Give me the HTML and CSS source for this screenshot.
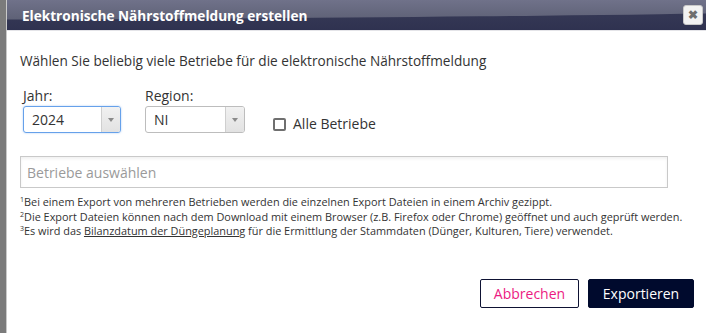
FILE: index.html
```html
<!DOCTYPE html>
<html lang="de">
  <head>
    <meta charset="UTF-8" />
    <meta name="viewport" content="width=device-width, initial-scale=1.0" />
    <title>Elektronische Nährstoffmeldung</title>
    <link rel="stylesheet" href="styles.css">
  </head>
  <body>
    <div class="page">
      <div class="strip"></div>
      <div class="dialog">
        <div class="dialog-header">
          <h1>Elektronische Nährstoffmeldung erstellen</h1>
          <button class="close" title="Schließen">&#x2716;</button>
        </div>
        <div class="dialog-body">
          <p class="intro">Wählen Sie beliebig viele Betriebe für die elektronische Nährstoffmeldung</p>
          <div class="filters">
            <div class="field year">
              <label>Jahr:</label>
              <div class="select focus">
                <span class="value">2024</span>
                <span class="arrow"></span>
              </div>
            </div>
            <div class="field region">
              <label>Region:</label>
              <div class="select">
                <span class="value">NI</span>
                <span class="arrow"></span>
              </div>
            </div>
            <label class="check">
              <span class="box"></span>
              Alle Betriebe
            </label>
          </div>
          <input class="search" type="text" placeholder="Betriebe auswählen" />
          <div class="notes">
            <p><sup>1</sup>Bei einem Export von mehreren Betrieben werden die einzelnen Export Dateien in einem Archiv gezippt.</p>
            <p><sup>2</sup>Die Export Dateien können nach dem Download mit einem Browser (z.B. Firefox oder Chrome) geöffnet und auch geprüft werden.</p>
            <p><sup>3</sup>Es wird das <u>Bilanzdatum der Düngeplanung</u> für die Ermittlung der Stammdaten (Dünger, Kulturen, Tiere) verwendet.</p>
          </div>
          <div class="actions">
            <button class="btn cancel">Abbrechen</button>
            <button class="btn primary">Exportieren</button>
          </div>
        </div>
      </div>
    </div>
  </body>
</html>
```

FILE: styles.css
```css
*,
::before,
::after {
  box-sizing: border-box;
}

body {
  margin: 0;
  font-family: "Open Sans", "Liberation Sans", sans-serif;
  color: #333;
  background-color: #fff;
}

.page {
  display: flex;
  height: 333px;
  overflow: hidden;
}

.strip {
  flex: 0 0 7px;
  background-color: #7b7b7b;
  border-right: 1px solid #c9c9c9;
}

.dialog {
  flex: 0 0 699px;
  display: flex;
  flex-direction: column;
}

.dialog-header {
  position: relative;
  display: flex;
  align-items: center;
  justify-content: space-between;
  height: 31px;
  padding: 0 3px 0 15px;
  overflow: hidden;
  background: linear-gradient(#3a3d59, #2f3250);
  border-bottom: 1px solid #e4e4e8;
}

/* glossy curve on top of the header */
.dialog-header::before {
  content: "";
  position: absolute;
  left: -1800px;
  width: 3000px;
  top: -31px;
  height: 51px;
  border-radius: 50%;
  background: linear-gradient(#70728a 60%, #5e6176);
}

.dialog-header h1 {
  position: relative;
  margin: 0;
  font-size: 13.6px;
  font-weight: 700;
  color: #fff;
}

.close {
  position: relative;
  width: 20px;
  height: 20px;
  padding: 0;
  border: 1px solid #c8c8c8;
  border-radius: 3px;
  background-color: #f2f2f2;
  color: #6e6e6e;
  font-size: 12px;
  font-weight: 700;
  line-height: 18px;
}

.dialog-body {
  padding: 20px 12px 0 13px;
}

.intro {
  margin: 0;
  font-size: 13.6px;
  line-height: 20px;
}

.filters {
  display: flex;
  align-items: flex-end;
  margin: 15px 0 0 3px;
}

.field label {
  display: block;
  font-size: 14px;
  line-height: 20px;
}

.field.region {
  margin-left: 24px;
}

.select {
  display: flex;
  height: 27px;
  border: 1px solid #bdbdbd;
  border-radius: 3px;
  overflow: hidden;
  font-size: 14px;
}

.year .select {
  width: 98px;
}

.region .select {
  width: 100px;
}

.select.focus {
  border-color: #66a1ea;
  box-shadow: 0 0 2px rgba(102, 161, 234, 0.6);
}

.select .value {
  flex: 1;
  padding-left: 8px;
  line-height: 25px;
}

.select .arrow {
  position: relative;
  flex: 0 0 19px;
  background: linear-gradient(#f1f1f1, #e2e2e2);
  border-left: 1px solid #cfcfcf;
}

.select .arrow::after {
  content: "";
  position: absolute;
  left: 6px;
  top: 11px;
  border-left: 3px solid transparent;
  border-right: 3px solid transparent;
  border-top: 4px solid #8a8a8a;
}

.check {
  display: flex;
  align-items: center;
  gap: 7px;
  margin: 0 0 -1px 28px;
  font-size: 14px;
  line-height: 20px;
}

.check .box {
  width: 13px;
  height: 13px;
  border: 2px solid #6f6f6f;
  border-radius: 2px;
}

.search {
  display: block;
  width: 648px;
  height: 32px;
  margin-top: 23px;
  padding: 0 6px;
  border: 1px solid #c9c9c9;
  box-shadow: inset 0 2px 3px rgba(0, 0, 0, 0.06);
  font-family: inherit;
  font-size: 14px;
  color: #333;
}

.search::placeholder {
  color: #9a9a9a;
}

.notes {
  margin-top: 7px;
}

.notes p {
  margin: 0;
  font-size: 10.9px;
  line-height: 14.5px;
  white-space: nowrap;
}

.notes sup {
  font-size: 7px;
  line-height: 0;
  vertical-align: 4px;
}

.actions {
  display: flex;
  justify-content: flex-end;
  gap: 9px;
  margin-top: 40px;
}

.btn {
  height: 29px;
  padding: 0;
  border-radius: 2px;
  font-family: inherit;
  font-size: 14px;
}

.btn.cancel {
  width: 99px;
  border: 1px solid #0e1233;
  background-color: #fff;
  color: #ec1a82;
}

.btn.primary {
  width: 106px;
  border: 1px solid #000a2d;
  background-color: #000a2d;
  color: #fff;
}
```
